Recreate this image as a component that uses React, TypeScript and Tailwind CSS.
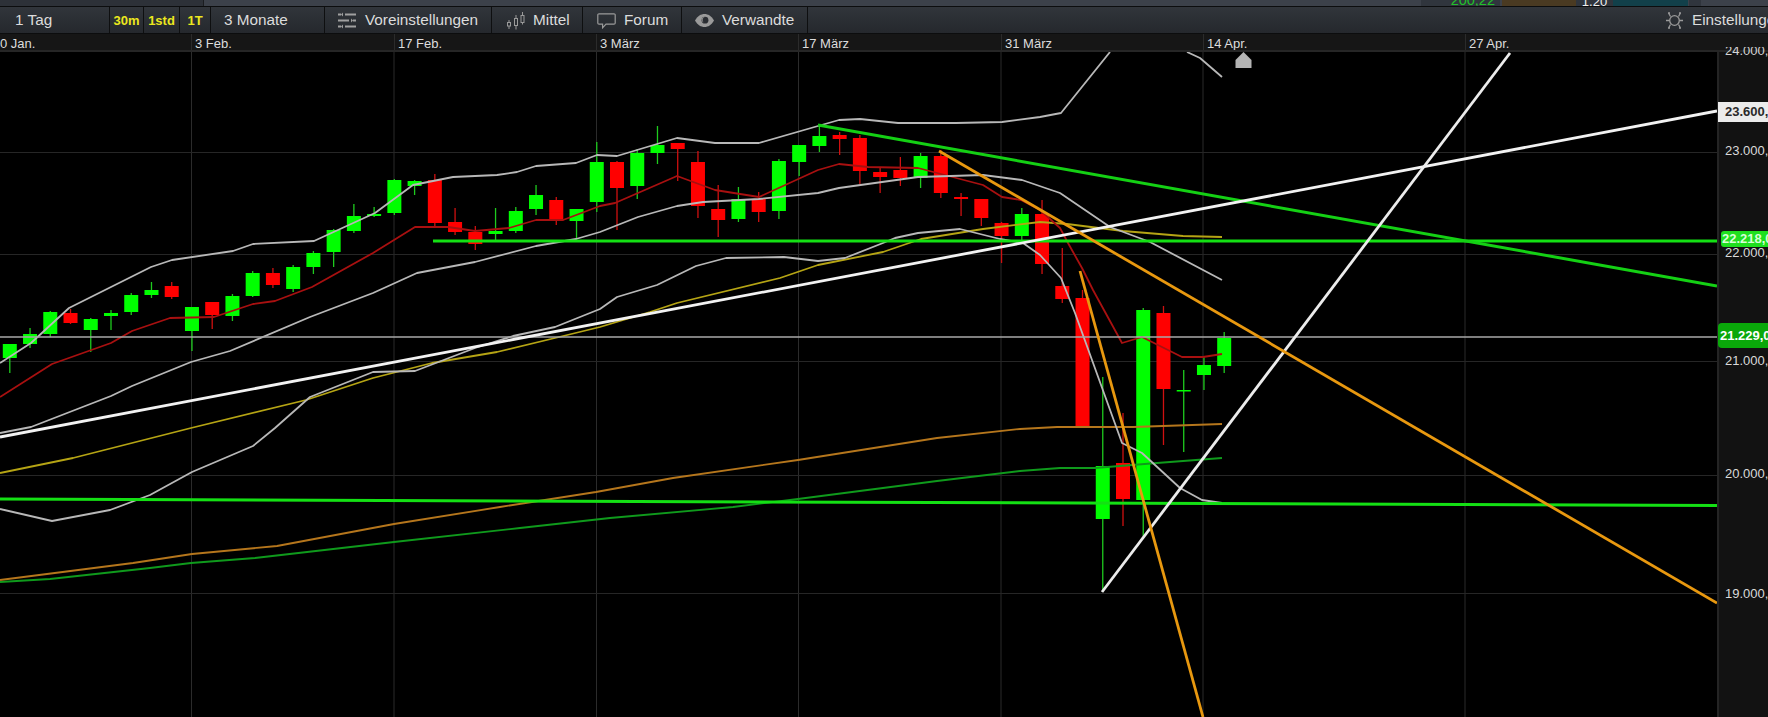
import React from "react";

type C = [number, number, number, number, number];
const candles: C[] = [
  [1,344,358,344,373],[1,334,344,328,348],[1,312,334,311,337],[0,313,323,309,324],[1,319,330,318,352],
  [1,313,316,310,330],[1,295,312,293,315],[1,290,295,282,298],[0,286,297,282,299],[1,307,331,307,351],
  [0,302,315,302,329],[1,296,316,294,321],[1,273,296,271,297],[0,273,285,268,288],[1,267,289,265,292],
  [1,253,267,251,274],[1,230,252,229,267],[1,216,231,204,233],[1,214,216,207,217],[1,180,213,179,215],
  [1,181,186,180,195],[0,180,223,174,227],[0,222,232,208,235],[0,232,244,226,250],[1,231,234,208,240],
  [1,211,231,207,233],[1,195,209,185,215],[0,200,221,197,225],[1,209,221,209,240],[1,162,202,142,212],
  [0,162,188,161,230],[1,153,186,149,199],[1,145,153,126,164],[0,143,149,143,181],[0,162,206,151,218],
  [0,209,220,185,237],[1,199,219,187,222],[0,199,212,192,222],[1,161,211,159,219],[1,145,162,145,176],
  [1,136,146,126,152],[0,135,139,132,155],[0,138,171,135,184],[0,172,177,168,193],[0,170,178,157,186],
  [1,156,178,153,188],[0,156,193,150,198],[0,197,199,193,216],[0,199,218,199,226],[0,223,236,222,263],
  [1,214,236,208,240],[0,214,264,200,274],[0,286,299,248,303],[0,298,426,290,426],[1,466,519,377,592],
  [0,463,499,413,526],[1,310,500,308,536],[0,313,389,306,445],[1,390,391,370,452],[1,365,375,357,390],
  [1,338,366,332,373],
];

const redMA = "0,397 52,364 111,343 132,331 170,318 214,317 253,304 275,301 312,287 373,253 394,240 415,227 448,227 475,231 509,228 536,220 563,220 600,206 615,203 677,176 715,190 759,197 818,170 839,164 868,167 918,168 983,185 1002,197 1021,200 1040,210 1060,228 1068,243 1082,268 1093,290 1122,343 1142,337 1170,351 1182,357 1203,357 1222,354";
const upperBB = "0,363 31,343 69,308 151,267 172,260 233,251 253,244 314,241 375,213 413,185 453,177 497,175 517,172 536,166 576,163 597,155 617,156 677,138 715,143 759,143 818,126 839,120 860,119 898,123 956,123 1002,122 1040,117 1061,113 1110,52";
const upperBB2 = "1187,52 1200,58 1222,77";
const midBB = "0,433 31,427 111,396 132,386 191,362 230,351 310,317 373,293 417,273 475,262 536,246 576,239 600,232 638,217 677,206 703,202 759,199 818,193 839,188 918,177 983,175 1022,180 1060,193 1110,227 1150,242 1222,280";
const lowerBB = "0,509 52,521 110,510 150,495 192,472 253,446 275,428 310,397 373,372 415,371 475,348 513,336 555,327 600,309 617,297 657,285 696,266 726,258 784,257 818,261 845,258 883,243 895,238 918,233 960,229 1000,239 1023,243 1040,255 1061,278 1075,313 1122,443 1142,453 1180,488 1202,500 1222,503";
const yellowMA = "0,473 73,458 191,428 306,400 373,378 432,363 497,352 555,338 600,327 650,312 677,303 780,278 818,265 883,252 921,239 983,229 1040,222 1067,224 1123,231 1183,236 1222,237";
const orangeMA = "0,580 133,563 192,554 277,546 394,524 500,507 596,492 673,478 798,460 937,438 1020,429 1057,427 1133,427 1222,424";
const greenMA = "0,582 50,579 150,568 191,563 255,558 394,542 520,528 610,518 733,507 798,499 937,481 1020,471 1060,468 1095,468 1157,463 1222,458";

const vGrid = [191.5, 394, 596.5, 798.5, 1001, 1203, 1465];
const hGrid = [152, 254, 361, 475, 593];

function SlidersIcon() {
  return (
    <svg width="18" height="17" viewBox="0 0 18 17" fill="none" stroke="#a0a0a0" strokeWidth="1.8" className="shrink-0">
      <path d="M0 2.500h3M7 2.500h11M0 8.500h11M15 8.500h3M0 14.500h3M7 14.500h11" />
      <path d="M5 .5l-2 2 2 2zM13 6.500l2 2-2 2zM5 12.500l-2 2 2 2z" fill="#a0a0a0" stroke="none" />
    </svg>
  );
}
function CandleIcon() {
  return (
    <svg width="18" height="20" viewBox="0 0 18 20" fill="none" stroke="#9a9a9a" strokeWidth="1" className="shrink-0">
      <rect x="0.5" y="11.5" width="3" height="3.5" />
      <path d="M2 9v2.500M2 15v3" />
      <rect x="7.5" y="7.5" width="3" height="7" />
      <path d="M9 4v3.500M9 14.500v4" />
      <rect x="14" y="4.5" width="3" height="7" />
      <path d="M15.500 1v3.500M15.500 11.500v2" />
    </svg>
  );
}
function BubbleIcon() {
  return (
    <svg width="19" height="16" viewBox="0 0 19 16" fill="none" stroke="#9a9a9a" strokeWidth="1.2" className="shrink-0">
      <path d="M2 .8h15a1.2 1.2 0 0 1 1.200 1.200v8a1.200 1.200 0 0 1-1.200 1.200H9l-3.400 3.600v-3.600H2A1.200 1.200 0 0 1 .8 10V2A1.200 1.200 0 0 1 2 .8z" />
    </svg>
  );
}
function EyeIcon() {
  return (
    <svg width="19" height="13" viewBox="0 0 19 13" className="shrink-0">
      <path d="M0 6.500C2.500 2 6 0 9.500 0S16.500 2 19 6.500C16.500 11 13 13 9.500 13S2.500 11 0 6.500z" fill="#9a9a9a" />
      <circle cx="10" cy="6.200" r="3.400" fill="#2a2d32" />
      <path d="M7 4.500a3.400 3.400 0 0 1 3-1.700 3.400 3.400 0 0 0-1.300 5.800A3.400 3.400 0 0 1 7 4.500z" fill="#9a9a9a" />
    </svg>
  );
}
function GearIcon() {
  return (
    <svg width="17" height="17" viewBox="0 0 17 17" fill="none" stroke="#9a9a9a" strokeWidth="1.300" className="shrink-0">
      <circle cx="8.500" cy="8.500" r="4.800" />
      <path d="M0 8.500h3.700M13.300 8.500H17M4.500 4.500L2.500 1M12.500 4.500l2-3.500M4.500 12.500l-2 3.500M12.500 12.500l2 3.500M2 1h2M13 1h2M2 16h2M13 16h2" />
    </svg>
  );
}

function Chart() {
  return (
    <svg width="1717" height="665" viewBox="0 52 1717 665" className="block shrink-0" style={{ overflow: "hidden" }}>
      {vGrid.map((x) => (
        <line key={x} x1={x} x2={x} y1={52} y2={717} stroke="#2b2b2b" strokeWidth="1" />
      ))}
      {hGrid.map((y) => (
        <line key={y} x1={0} x2={1717} y1={y + 0.5} y2={y + 0.5} stroke="#262626" strokeWidth="1" />
      ))}
      {candles.map((c, i) => {
        const x = 9.8 + i * 20.24;
        const col = c[0] ? "#00ff00" : "#ff0000";
        return (
          <g key={i}>
            <line x1={x} x2={x} y1={c[3]} y2={c[4]} stroke={c[0] ? "#1ecb1e" : "#cf1010"} strokeWidth="1.300" />
            <rect x={x - 7} y={c[1]} width={14} height={Math.max(c[2] - c[1], 1.500)} fill={col} />
          </g>
        );
      })}
      <g fill="none" strokeLinejoin="round">
        <polyline points={greenMA} stroke="#0f9a1c" strokeWidth="1.800" />
        <polyline points={orangeMA} stroke="#b5761c" strokeWidth="1.800" />
        <polyline points={yellowMA} stroke="#b5a414" strokeWidth="1.800" />
        <polyline points={redMA} stroke="#a81010" strokeWidth="1.800" />
        <polyline points={midBB} stroke="#b8b8b8" strokeWidth="1.800" />
        <polyline points={lowerBB} stroke="#b8b8b8" strokeWidth="1.800" />
        <polyline points={upperBB} stroke="#b8b8b8" strokeWidth="1.800" />
        <polyline points={upperBB2} stroke="#b8b8b8" strokeWidth="1.800" />
      </g>
      <line x1={0} x2={1717} y1={337} y2={337} stroke="#a8a8a8" strokeWidth="1.300" />
      <line x1={433} x2={1717} y1={241} y2={241} stroke="#14e014" strokeWidth="3" />
      <line x1={0} x2={1717} y1={499} y2={505.500} stroke="#14e014" strokeWidth="3" />
      <line x1={818} x2={1717} y1={125} y2={286} stroke="#14d014" strokeWidth="3" />
      <line x1={0} x2={1717} y1={437} y2={111} stroke="#f2f2f2" strokeWidth="2.800" />
      <line x1={1102} x2={1510} y1={592} y2={53} stroke="#ececec" strokeWidth="2.800" />
      <line x1={939} x2={1717} y1={151} y2={603} stroke="#e8980f" strokeWidth="2.800" />
      <line x1={1080} x2={1203} y1={271} y2={717} stroke="#e8980f" strokeWidth="2.800" />
      <path d="M1243.500 52l8 8v8h-16v-8z" fill="#b4b4b4" />
    </svg>
  );
}

const axisLabels: [string, string][] = [
  ["23.000,00", "top-[91px]"],
  ["22.000,00", "top-[193px]"],
  ["21.000,00", "top-[301px]"],
  ["20.000,00", "top-[414px]"],
  ["19.000,00", "top-[534px]"],
];

function ToolButton({ className, children }: { className: string; children: React.ReactNode }) {
  return (
    <div className={`flex h-full shrink-0 items-center border-r border-[#0e0f10] pt-[1px] ${className}`}>{children}</div>
  );
}

function DateCell({ className, label }: { className: string; label: string }) {
  return (
    <div className={`h-full shrink-0 overflow-hidden border-l border-[#2b2b2b] pl-[3px] pt-[3px] ${className}`}>
      {label}
    </div>
  );
}

export default function App() {
  return (
    <div className="flex h-[717px] w-[1768px] flex-col overflow-hidden bg-black font-['Liberation_Sans',Arial,sans-serif] text-[#d9d9d9]">
      {/* top strip */}
      <div className="flex h-[7px] shrink-0 border-b border-[#0c0d0e] bg-[#3c414a] text-[13px] leading-none">
        <div className="w-[204px] shrink-0 border-r border-[#1b1d20] bg-[#2d3138]" />
        <div className="w-[1217px] shrink-0" />
        <div className="flex w-[79px] shrink-0 items-end justify-end overflow-hidden bg-[#30353d] pr-[5px] text-[14.500px] text-[#22c02a]">
          <span className="-mb-[1px]">200,22</span>
        </div>
        <div className="ml-[2px] w-[74px] shrink-0 bg-[#4a3a22]" />
        <div className="flex w-[37px] shrink-0 items-end justify-center overflow-hidden bg-[#2f343c] text-[#eeeeee]">
          <span className="-mb-[2px]">1,20</span>
        </div>
        <div className="w-[75px] shrink-0 bg-[#12404a]" />
        <div className="ml-[1px] w-[12px] shrink-0 bg-[#30353d]" />
      </div>

      {/* toolbar */}
      <div className="flex h-[27px] shrink-0 items-center border-b border-[#0c0d0e] bg-gradient-to-b from-[#31353b] to-[#25282d] text-[15.300px] text-[#dcdcdc]">
        <ToolButton className="w-[110px] pl-[15px]">1 Tag</ToolButton>
        <ToolButton className="w-[34px] justify-center text-[13px] font-bold text-[#ece81e]">30m</ToolButton>
        <ToolButton className="w-[36px] justify-center text-[13px] font-bold text-[#ece81e]">1std</ToolButton>
        <ToolButton className="w-[31px] justify-center text-[13px] font-bold text-[#ece81e]">1T</ToolButton>
        <ToolButton className="w-[114px] pl-[13px]">3 Monate</ToolButton>
        <ToolButton className="w-[167px] gap-[9px] pl-[13px]">
          <SlidersIcon />
          Voreinstellungen
        </ToolButton>
        <ToolButton className="w-[91px] gap-[8px] pl-[15px]">
          <CandleIcon />
          Mittel
        </ToolButton>
        <ToolButton className="w-[99px] gap-[8px] pl-[14px]">
          <BubbleIcon />
          Forum
        </ToolButton>
        <ToolButton className="w-[126px] gap-[8px] pl-[13px]">
          <EyeIcon />
          Verwandte
        </ToolButton>
        <div className="ml-auto flex w-[102px] shrink-0 items-center gap-[9px] overflow-hidden whitespace-nowrap pt-[1px]">
          <GearIcon />
          Einstellungen
        </div>
      </div>

      {/* date axis */}
      <div className="flex h-[18px] shrink-0 border-b-2 border-[#262626] bg-[#161616] text-[13px] leading-[13px] text-[#dddddd]">
        <div className="h-full w-[191px] shrink-0 overflow-hidden pl-0 pt-[3px]">0 Jan.</div>
        <DateCell className="w-[203px]" label="3 Feb." />
        <DateCell className="w-[202px]" label="17 Feb." />
        <DateCell className="w-[202px]" label="3 März" />
        <DateCell className="w-[203px]" label="17 März" />
        <DateCell className="w-[202px]" label="31 März" />
        <DateCell className="w-[262px]" label="14 Apr." />
        <DateCell className="flex-1" label="27 Apr." />
      </div>

      {/* chart + price axis */}
      <div className="flex min-h-0 flex-1">
        <Chart />
        <div className="relative flex-1 border-l-2 border-[#242424] bg-[#121212] text-[13px] leading-[15px] whitespace-nowrap">
          <div className="absolute -top-[5px] left-[6px] h-[10px] overflow-hidden">
            <div className="-mt-[4px] text-[#d4d4d4]">24.000,00</div>
          </div>
          <div className="absolute -left-[1px] top-[50px] h-[20px] w-[60px] bg-[#ececec] pl-[7px] text-[13px] font-bold leading-[20px] text-[#2a2a2a]">
            23.600,00
          </div>
          {axisLabels.map(([t, pos]) => (
            <div key={t} className={`absolute left-[6px] text-[#dadada] ${pos}`}>
              {t}
            </div>
          ))}
          <div className="absolute left-[2px] top-[179px] h-[16px] w-[60px] rounded-l-[3px] bg-[#1fe01f] pl-[1px] font-bold leading-[16px] text-[#d8ffd8]">
            22.218,00
          </div>
          <div className="absolute -left-[1px] top-[271px] h-[25px] w-[60px] rounded-l-[4px] bg-[#0aa80a] pl-[2px] font-bold leading-[25px] text-white">
            21.229,00
          </div>
        </div>
      </div>
    </div>
  );
}
